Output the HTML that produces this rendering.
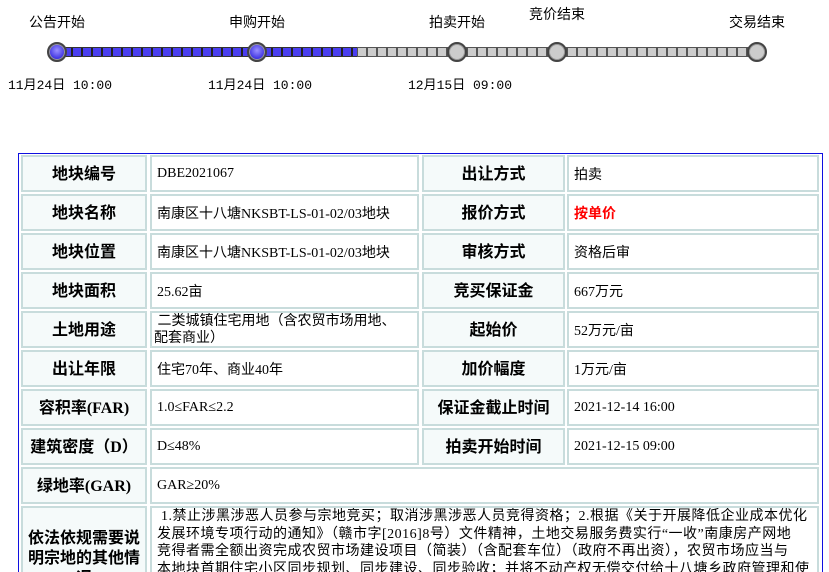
<!DOCTYPE html><html><head><meta charset="utf-8"><style>
html,body{margin:0;width:829px;height:572px;overflow:hidden}
body{background:#fff;font-family:"Liberation Serif","Noto Sans CJK SC",serif;position:relative}
.a{position:absolute}
.t{font-family:"Liberation Sans","Noto Sans CJK SC",sans-serif;font-size:14px;color:#000;white-space:nowrap}
.d{font-family:"Liberation Mono","Noto Sans CJK SC",monospace;font-size:13px;white-space:nowrap}
.bar{position:absolute;top:47px;height:10px;box-sizing:border-box;border:1px solid #333}
.dot{position:absolute;top:42px;width:20px;height:20px;border-radius:50%;box-sizing:border-box;border:2px solid #444;box-shadow:0 0 0 1px #999 inset}
.c{position:absolute;box-sizing:border-box;border:2px solid #c8dcdc;height:37px;display:flex;align-items:center;overflow:hidden}
.l{background:#f5fafa;justify-content:center;font-family:"Liberation Serif","Noto Sans CJK SC",serif;font-weight:bold;font-size:16px;padding-bottom:4px}
.v{padding-left:5px;font-size:14px;font-family:"Liberation Serif","Noto Sans CJK SC",serif;padding-top:1px}
</style></head><body>
<div class="a t" style="left:29px;top:12px">公告开始</div>
<div class="a t" style="left:229px;top:12px">申购开始</div>
<div class="a t" style="left:429px;top:12px">拍卖开始</div>
<div class="a t" style="left:529px;top:4px">竞价结束</div>
<div class="a t" style="left:729px;top:12px">交易结束</div>
<div class="bar" style="left:62px;width:296px;background:repeating-linear-gradient(90deg,#4a3ef0 0 8px,#222 8px 10px)"></div>
<div class="bar" style="left:357px;width:395px;border-color:#555;background:repeating-linear-gradient(90deg,#ccc 0 8px,#555 8px 10px)"></div>
<div class="dot" style="left:47px;background:radial-gradient(circle at 50% 40%,#9a90ff,#3a2ee0 70%)"></div>
<div class="dot" style="left:247px;background:radial-gradient(circle at 50% 40%,#9a90ff,#3a2ee0 70%)"></div>
<div class="dot" style="left:447px;background:#ccc"></div>
<div class="dot" style="left:547px;background:#ccc"></div>
<div class="dot" style="left:747px;background:#ccc"></div>
<div class="a d" style="left:8px;top:74px">11月24日 10:00</div>
<div class="a d" style="left:208px;top:74px">11月24日 10:00</div>
<div class="a d" style="left:408px;top:74px">12月15日 09:00</div>
<div class="a" style="left:18px;top:153px;width:805px;height:430px;border:1px solid #1010e0;box-sizing:border-box"></div>

<div class="c l" style="left:21px;top:155px;width:126px">地块编号</div><div class="c v" style="left:150px;top:155px;width:269px">DBE2021067</div>
<div class="c l" style="left:422px;top:155px;width:143px">出让方式</div><div class="c v" style="left:567px;top:155px;width:252px">拍卖</div>

<div class="c l" style="left:21px;top:194px;width:126px">地块名称</div><div class="c v" style="left:150px;top:194px;width:269px">南康区十八塘NKSBT-LS-01-02/03地块</div>
<div class="c l" style="left:422px;top:194px;width:143px">报价方式</div><div class="c v" style="left:567px;top:194px;width:252px;color:#f00;font-weight:bold">按单价</div>

<div class="c l" style="left:21px;top:233px;width:126px">地块位置</div><div class="c v" style="left:150px;top:233px;width:269px">南康区十八塘NKSBT-LS-01-02/03地块</div>
<div class="c l" style="left:422px;top:233px;width:143px">审核方式</div><div class="c v" style="left:567px;top:233px;width:252px">资格后审</div>

<div class="c l" style="left:21px;top:272px;width:126px">地块面积</div><div class="c v" style="left:150px;top:272px;width:269px">25.62亩</div>
<div class="c l" style="left:422px;top:272px;width:143px">竞买保证金</div><div class="c v" style="left:567px;top:272px;width:252px">667万元</div>

<div class="c l" style="left:21px;top:311px;width:126px">土地用途</div><div class="c v" style="left:150px;top:311px;width:269px;padding-left:2px;padding-top:0;line-height:17px"><span>&nbsp;二类城镇住宅用地（含农贸市场用地、<br>配套商业）</span></div>
<div class="c l" style="left:422px;top:311px;width:143px">起始价</div><div class="c v" style="left:567px;top:311px;width:252px">52万元/亩</div>

<div class="c l" style="left:21px;top:350px;width:126px">出让年限</div><div class="c v" style="left:150px;top:350px;width:269px">住宅70年、商业40年</div>
<div class="c l" style="left:422px;top:350px;width:143px">加价幅度</div><div class="c v" style="left:567px;top:350px;width:252px">1万元/亩</div>

<div class="c l" style="left:21px;top:389px;width:126px">容积率(FAR)</div><div class="c v" style="left:150px;top:389px;width:269px">1.0≤FAR≤2.2</div>
<div class="c l" style="left:422px;top:389px;width:143px">保证金截止时间</div><div class="c v" style="left:567px;top:389px;width:252px">2021-12-14 16:00</div>

<div class="c l" style="left:21px;top:428px;width:126px">建筑密度（D）</div><div class="c v" style="left:150px;top:428px;width:269px">D≤48%</div>
<div class="c l" style="left:422px;top:428px;width:143px">拍卖开始时间</div><div class="c v" style="left:567px;top:428px;width:252px">2021-12-15 09:00</div>

<div class="c l" style="left:21px;top:467px;width:126px">绿地率(GAR)</div><div class="c v" style="left:150px;top:467px;width:669px">GAR≥20%</div>

<div class="c l" style="left:21px;top:506px;width:126px;height:90px;align-items:flex-start;padding-top:21px;padding-bottom:0;line-height:20px;text-align:center">依法依规需要说<br>明宗地的其他情<br>况</div>
<div class="c v" style="left:150px;top:506px;width:669px;height:90px;align-items:flex-start;padding-top:0;line-height:17.5px;white-space:nowrap;font-size:14px;letter-spacing:0.5px;display:block">&nbsp;1.禁止涉黑涉恶人员参与宗地竞买；取消涉黑涉恶人员竞得资格；2.根据《关于开展降低企业成本优化<br>发展环境专项行动的通知》（赣市字[2016]8号）文件精神，土地交易服务费实行“一收”南康房产网地<br>竞得者需全额出资完成农贸市场建设项目（简装）（含配套车位）（政府不再出资），农贸市场应当与<br>本地块首期住宅小区同步规划、同步建设、同步验收；并将不动产权无偿交付给十八塘乡政府管理和使</div>
</body></html>
